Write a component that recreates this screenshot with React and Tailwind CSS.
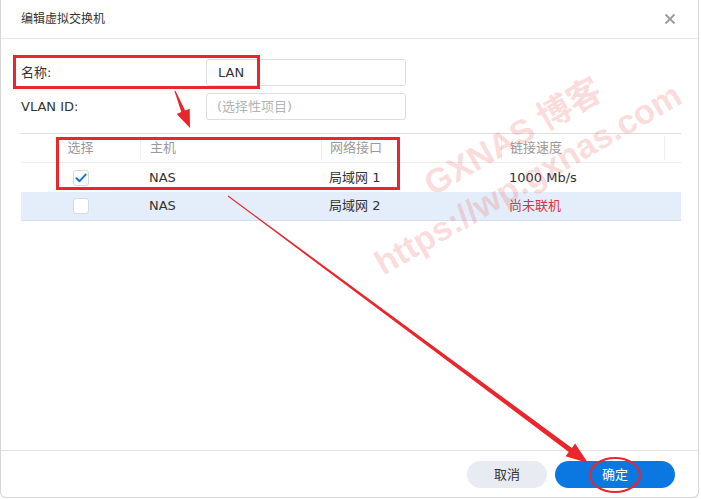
import React from "react";

const latin = { fontFamily: '"DejaVu Sans", "Noto Sans CJK SC", sans-serif' };

function CheckBox({ checked }) {
  return (
    <div className="w-4 h-4 rounded-[3px] border border-[#d5d9e0] bg-white flex items-center justify-center">
      {checked && (
        <svg width="12" height="10" viewBox="0 0 12 10">
          <path d="M1.5 5.2 L4.6 8.2 L10.6 1.6" fill="none" stroke="#1676d8" strokeWidth="2" strokeLinecap="round" strokeLinejoin="round" />
        </svg>
      )}
    </div>
  );
}

function Row({ checked, port, speed, offline, highlight }) {
  return (
    <div className={`flex h-[29px] items-center text-[13px] text-[#333] ${highlight ? "bg-[#e3eefa] border-b border-[#d3dfec]" : "bg-white"}`}>
      <div className="w-[119px] flex justify-center">
        <CheckBox checked={checked} />
      </div>
      <div className="w-[181px] pl-[9px]">NAS</div>
      <div className="w-[180px] pl-[8px]">{port}</div>
      <div className={`w-[163px] pl-[8px] ${offline ? "text-[#dc3149]" : ""}`}>{speed}</div>
    </div>
  );
}

export default function App() {
  return (
    <div className="relative w-[701px] h-[499px] bg-white overflow-hidden" style={latin}>
      <div className="w-[699px] h-[498px] flex flex-col border-r border-b border-l border-[#d6d6d6] rounded-b-[6px]">
        {/* header */}
        <div className="h-[39px] flex items-center justify-between pl-5 pr-[22px] border-b border-[#e6e6e6] shrink-0">
          <span className="text-[12px] text-[#333]">编辑虚拟交换机</span>
          <svg width="12" height="12" viewBox="0 0 12 12">
            <path d="M1.5 1.5 L10.5 10.5 M10.5 1.5 L1.5 10.5" stroke="#9a9a9a" strokeWidth="1.8" />
          </svg>
        </div>

        {/* body */}
        <div className="flex-1 px-5 pt-5">
          <div className="flex items-center h-[27px]">
            <div className="w-[185px] text-[13px] text-[#333]">名称:</div>
            <div className="w-[200px] h-[27px] rounded-[3px] border border-[#dedede] pl-[11px] flex items-center text-[13px] text-[#333]">LAN</div>
          </div>
          <div className="flex items-center h-[27px] mt-[7px]">
            <div className="w-[185px] text-[13px] text-[#333]">VLAN ID:</div>
            <div className="w-[200px] h-[27px] rounded-[3px] border border-[#dedede] pl-[10px] flex items-center text-[13px] text-[#b3b3b3]">(选择性项目)</div>
          </div>

          {/* table */}
          <div className="mt-[13px] w-[660px] border-t border-[#dddddd]">
            <div className="flex h-[29px] items-center text-[13px] text-[#9a9a9a] border-b border-[#ececec]">
              <div className="w-[119px] h-[24px] flex items-center justify-center">选择</div>
              <div className="w-[181px] h-[24px] flex items-center pl-[9px] border-l border-[#eeeeee]">主机</div>
              <div className="w-[180px] h-[24px] flex items-center pl-[8px] border-l border-[#eeeeee]">网络接口</div>
              <div className="w-[163px] h-[24px] flex items-center pl-[8px] border-l border-[#eeeeee]">链接速度</div>
              <div className="w-[17px] h-[24px] border-l border-[#eeeeee]" />
            </div>
            <Row checked port="局域网 1" speed="1000 Mb/s" />
            <Row port="局域网 2" speed="尚未联机" offline highlight />
          </div>
        </div>

        {/* footer */}
        <div className="h-[47px] border-t border-[#e3e3e3] flex items-start justify-end gap-2 pr-[23px] pt-[10px] shrink-0">
          <button className="w-[80px] h-[27px] rounded-full bg-[#e8ecf2] text-[13px] text-[#333]">取消</button>
          <button className="w-[120px] h-[27px] rounded-full bg-[#0b78e2] text-[13px] text-white">确定</button>
        </div>
      </div>

      {/* watermark */}
      <div className="absolute left-[513px] top-[137px] -translate-x-1/2 -translate-y-1/2 -rotate-[30deg] whitespace-nowrap text-[34px] font-bold text-[rgba(238,70,70,0.2)] pointer-events-none" style={{ fontFamily: '"Liberation Sans", "Noto Sans CJK SC", sans-serif' }}>
        GXNAS 博客
      </div>
      <div className="absolute left-[528px] top-[179px] -translate-x-1/2 -translate-y-1/2 -rotate-[30deg] whitespace-nowrap text-[34px] font-bold text-[rgba(238,70,70,0.2)] pointer-events-none" style={{ fontFamily: '"Liberation Sans", sans-serif' }}>
        https://wp.gxnas.com
      </div>

      {/* annotations */}
      <div className="absolute left-[13px] top-[55px] w-[247px] h-[34px] border-[3px] border-[#e8262c] pointer-events-none" />
      <div className="absolute left-[56px] top-[137px] w-[344px] h-[53px] border-[3px] border-[#e8262c] pointer-events-none" />
      <div className="absolute left-[589px] top-[457px] w-[52px] h-[36px] rounded-[50%] border-2 border-[#e8262c] pointer-events-none" />
      <svg className="absolute left-0 top-0 pointer-events-none" width="701" height="499">
        <polygon fill="#e8262c" points="174.5,91.2 175.5,90.8 185.1,110.5 189.7,108.7 190,128 176.7,113.9 181.3,112.1" />
        <polygon fill="#e8262c" points="227.7,196.4 228.3,195.6 571.8,447.9 575.1,443.5 588,463 565.5,456.3 568.8,451.9" />
      </svg>
    </div>
  );
}
